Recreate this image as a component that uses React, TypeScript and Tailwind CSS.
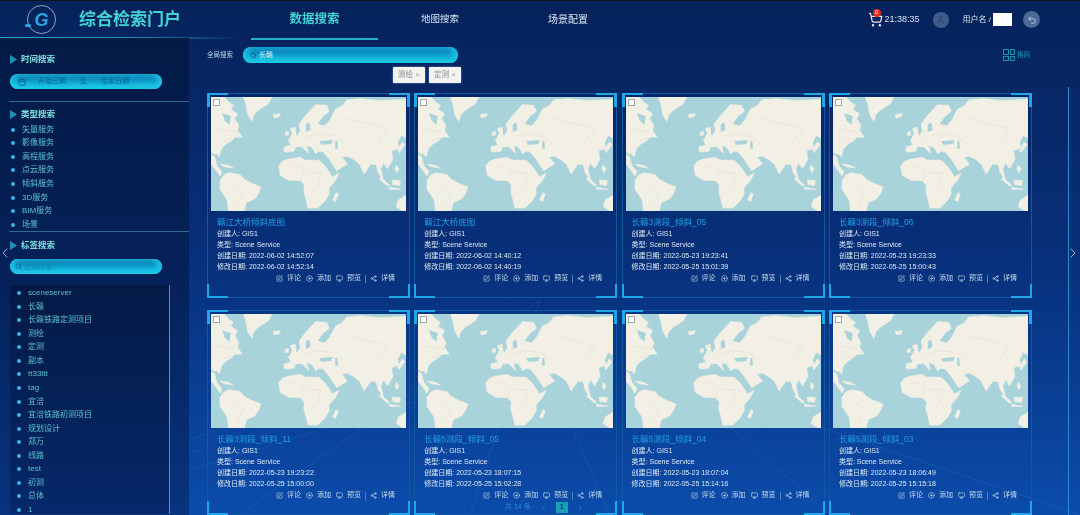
import { Calendar, ChevronLeft, ChevronRight, CirclePlus, Monitor, Search, Share2, ShoppingCart, SquarePen, Undo2, User } from "lucide-react"

const sans = "font-['Liberation_Sans','Noto_Sans_CJK_SC',sans-serif]"

const typeItems = ["矢量服务", "影像服务", "高程服务", "点云服务", "倾斜服务", "3D服务", "BIM服务", "场景"]
const tagItems = ["sceneserver", "长赣", "长赣铁路定测项目", "测绘", "定测", "副本", "tt33ttt", "tag", "宜涪", "宜涪铁路初测项目", "规划设计", "郑万", "线路", "test", "初测", "总体", "1"]

const cards = [
  { title: "赣江大桥倾斜底图", created: "2022-06-02 14:52:07", modified: "2022-06-02 14:52:14" },
  { title: "赣江大桥底图", created: "2022-06-02 14:40:12", modified: "2022-06-02 14:40:19" },
  { title: "长赣3测段_倾斜_05", created: "2022-05-23 19:23:41", modified: "2022-05-25 15:01:39" },
  { title: "长赣3测段_倾斜_06", created: "2022-05-23 19:23:33", modified: "2022-05-25 15:00:43" },
  { title: "长赣3测段_倾斜_11", created: "2022-05-23 19:23:22", modified: "2022-05-25 15:00:00" },
  { title: "长赣5测段_倾斜_05", created: "2022-05-23 18:07:15", modified: "2022-05-25 15:02:28" },
  { title: "长赣5测段_倾斜_04", created: "2022-05-23 18:07:04", modified: "2022-05-25 15:14:16" },
  { title: "长赣5测段_倾斜_03", created: "2022-05-23 18:06:49", modified: "2022-05-25 15:15:18" },
]

function SectionTitle({ label }: { label: string }) {
  return (
    <div className="flex items-center gap-[4px] pl-[10px] h-[14px]">
      <svg width="7" height="9" viewBox="0 0 7 9"><path d="M0 0 L7 4.5 L0 9 Z" fill="#1b93b8" /></svg>
      <span className="text-[8.5px] font-bold text-[#7fe0e0]">{label}</span>
    </div>
  )
}

function Pill({ children, className }: { children: React.ReactNode; className: string }) {
  return (
    <div className={`flex items-center rounded-full bg-gradient-to-b from-[#0a5f9e] via-[#10a0cf] to-[#1fd3ea] shadow-[inset_4px_0_6px_#1cc4e4,inset_-4px_0_6px_#1cc4e4] ${className}`}>
      {children}
    </div>
  )
}

function WorldMap() {
  return (
    <svg viewBox="33 35 582 342" className="w-full h-full block" preserveAspectRatio="none">
      <rect x="33" y="35" width="582" height="342" fill="#a9d3db" />
      <g fill="#f2efe5" stroke="#f2efe5" strokeWidth="2" strokeLinejoin="round">
        {/* north america */}
        <path d="M33 35 L72 35 L85 50 L100 60 L92 72 L112 85 L104 100 L116 120 L112 135 L126 155 L104 156 L96 165 L78 176 L64 190 L58 214 L50 206 L42 206 L33 200 Z" />
        <path d="M33 208 L44 214 L50 240 L66 260 L60 272 L46 252 L33 236 Z" />
        <path d="M60 236 L84 240 L100 248 L72 244 Z" />
        {/* greenland, iceland */}
        <path d="M130 35 L215 35 L204 55 L172 76 L160 90 L155 108 L143 88 L138 60 Z" />
        <path d="M218 88 L240 85 L236 95 L222 97 Z" />
        {/* south america */}
        <path d="M60 285 L72 268 L88 262 L120 268 L132 282 L150 292 L182 305 L176 322 L164 340 L138 352 L132 377 L85 377 L82 345 L60 312 Z" />
        {/* africa */}
        <path d="M235 242 L246 228 L262 222 L300 216 L312 224 L355 225 L372 240 L385 258 L395 275 L415 264 L405 285 L385 308 L386 325 L375 345 L352 368 L322 368 L316 340 L310 320 L312 300 L300 286 L265 285 L240 270 Z" />
        {/* eurasia */}
        <path d="M250 196 L252 184 L272 180 L264 164 L274 155 L292 150 L300 136 L296 116 L314 92 L345 58 L378 60 L386 78 L368 92 L350 116 L372 122 L388 104 L404 72 L424 62 L438 44 L480 40 L540 46 L615 42 L615 158 L600 150 L590 172 L594 188 L572 196 L576 222 L560 250 L548 232 L540 250 L548 286 L532 262 L526 238 L510 236 L490 266 L476 236 L456 220 L438 212 L424 216 L440 236 L408 256 L385 220 L368 200 L354 198 L346 206 L334 186 L318 180 L324 204 L304 184 L286 184 L280 198 L256 200 Z" />
        {/* uk, ireland */}
        <path d="M270 130 L284 126 L288 154 L268 160 L276 144 Z" />
        <path d="M256 140 L264 138 L264 150 L254 150 Z" />
        {/* madagascar */}
        <path d="M406 322 L413 326 L405 348 L396 344 Z" />
        {/* australia */}
        <path d="M615 330 L592 344 L586 364 L606 377 L615 377 Z" />
        {/* indonesia, philippines */}
        <path d="M540 276 L566 300 L560 302 L536 282 Z" />
        <path d="M574 284 L598 286 L596 300 L576 298 Z" />
        <path d="M566 306 L600 312 L566 312 Z" />
        <path d="M586 240 L594 250 L588 262 L582 250 Z" />
        {/* japan */}
        <path d="M604 170 L612 178 L594 202 L590 194 Z" />
      </g>
      <g fill="#a9d3db">
        <path d="M66 84 L92 92 L88 118 L74 106 Z" />
        <path d="M356 168 L396 164 L392 176 L362 178 Z" />
        <path d="M404 166 L410 166 L412 190 L404 190 Z" />
        <path d="M316 118 L326 110 L330 134 L316 140 Z" />
      </g>
      <g stroke="#dcccc6" strokeWidth="0.9" fill="none">
        <path d="M320 262 L360 262 L352 300 L332 322" />
        <path d="M270 240 L310 250 L302 284" />
        <path d="M440 100 L560 130 L522 186" />
        <path d="M300 160 L350 145 L400 150 L440 180" />
        <path d="M100 300 L130 320 L110 360" />
        <path d="M44 130 L110 140 M60 170 L96 160" />
      </g>
    </svg>
  )
}

function Corners() {
  const c = "absolute bg-[#1ea8ea]"
  return (
    <>
      <span className={`${c} -left-px -top-px w-[21px] h-[2px]`} />
      <span className={`${c} -left-px -top-px w-[3px] h-[14px]`} />
      <span className={`${c} -right-px -top-px w-[21px] h-[2px]`} />
      <span className={`${c} -right-px -top-px w-[3px] h-[14px]`} />
      <span className={`${c} -left-px -bottom-px w-[21px] h-[2px]`} />
      <span className={`${c} -left-px -bottom-px w-[2px] h-[14px]`} />
      <span className={`${c} -right-px -bottom-px w-[21px] h-[2px]`} />
      <span className={`${c} -right-px -bottom-px w-[2px] h-[14px]`} />
    </>
  )
}

function Card({ title, created, modified }: { title: string; created: string; modified: string }) {
  return (
    <div className="relative h-[205px] border border-[#10589f] px-[3px] pt-[3px]">
      <Corners />
      <div className="relative h-[114px]">
        <WorldMap />
        <span className="absolute left-[2px] top-[2px] w-[7px] h-[7px] bg-white border border-[#9aa]" />
      </div>
      <div className="pl-[6px] pt-[6px] text-[7px] text-[#dbe8f2]">
        <div className="text-[8.5px] leading-[11px] text-[#1e9fe6]">{title}</div>
        <div className="leading-[11.1px]">创建人: GIS1</div>
        <div className="leading-[11.1px]">类型: Scene Service</div>
        <div className="leading-[11.1px]">创建日期: {created}</div>
        <div className="leading-[11.1px]">修改日期: {modified}</div>
      </div>
      <div className="flex items-center justify-end gap-[4px] pr-[11px] pt-[1px] text-[7px] text-[#c8dcec]">
        <SquarePen size={7} />
        <span>评论</span>
        <CirclePlus size={7} className="ml-[1px]" />
        <span>添加</span>
        <Monitor size={7} className="ml-[1px]" />
        <span>预览</span>
        <span className="w-px h-[8px] bg-[#4d7fb0]" />
        <Share2 size={7} />
        <span>详情</span>
      </div>
    </div>
  )
}

function TagChip({ label }: { label: string }) {
  return (
    <div className="flex items-center justify-between w-[32px] h-[16px] px-[5px] bg-[#f3f4f2] text-[7.5px] text-[#8a8a8a] rounded-[1px] shadow-[0_0_2px_#7fa6d8]">
      <span>{label}</span>
      <span className="text-[8px] text-[#a5a5a5]">×</span>
    </div>
  )
}

export default function App() {
  return (
    <div className={`${sans} relative w-[1080px] h-[515px] overflow-hidden bg-gradient-to-b from-[#06225a] via-[#07307a] to-[#0b4cab] blur-[0.5px]`}>
      {/* perspective lines */}
      <svg className="absolute inset-0 w-full h-full pointer-events-none" viewBox="0 0 1080 515">
        <g stroke="#3f86d8" strokeWidth="0.7" opacity="0.3">
          <path d="M540 300 L240 515" />
          <path d="M540 300 L470 515" />
          <path d="M560 400 L610 515" />
          <path d="M700 400 L830 515" />
          <path d="M189 470 L420 400" />
          <path d="M189 440 L300 400" />
          <path d="M800 420 L1080 515" />
          <path d="M0 510 L200 450" />
        </g>
      </svg>

      <header className="relative flex items-center h-[38px] border-t border-[#10141f]">
        <div className="flex items-center w-[251px] h-full pl-[27px]">
          <div className="relative flex items-center justify-center w-[29px] h-[29px] rounded-full border border-[#8ea8c4]">
            <span className="text-[18px] font-bold italic text-[#2aa8e8] leading-none">G</span>
            <span className="absolute left-[-3px] bottom-[6px] w-[6px] h-[3px] rounded-full bg-[#2aa8e8]" />
          </div>
          <span className="ml-[23px] text-[17px] font-bold text-[#42d3d6]">综合检索门户</span>
        </div>
        <nav className="flex items-center h-full">
          <div className="flex items-center justify-center w-[127px] h-full text-[12.5px] font-bold text-[#42d3d6]">数据搜索</div>
          <div className="ml-[43px] text-[9.5px] text-[#d5e4f0]">地图搜索</div>
          <div className="ml-[89px] text-[10px] text-[#d5e4f0]">场景配置</div>
        </nav>
        <div className="ml-auto flex items-center pr-[40px] text-[#d5e4f0]">
          <div className="relative">
            <ShoppingCart size={15} className="text-[#f0e6e6]" />
            <span className="absolute -top-[3px] left-[5px] flex items-center justify-center w-[8px] h-[8px] rounded-full bg-[#e0301e] text-[5px] text-white">0</span>
          </div>
          <span className="ml-[2px] text-[9px]">21:38:35</span>
          <div className="ml-[13px] flex items-center justify-center w-[16px] h-[16px] rounded-full bg-[#3f5c8c]">
            <User size={9} className="text-[#1f3b70]" />
          </div>
          <span className="ml-[14px] text-[8px]">用户名 /</span>
          <span className="ml-[2px] w-[19px] h-[13px] bg-white" />
          <div className="ml-[11px] flex items-center justify-center w-[17px] h-[17px] rounded-full bg-[#4a6a9a]">
            <Undo2 size={10} className="text-[#c8d4e4]" />
          </div>
        </div>
        <span className="absolute left-[251px] -bottom-[2px] w-[127px] h-[2px] bg-[#23b4cc]" />
        <span className="absolute left-0 -bottom-[1px] w-[240px] h-[2px] bg-gradient-to-r from-[#23b4dc] via-[#1a94c4] to-transparent" />
      </header>

      <div className="relative flex h-[477px]">
        <aside className="w-[189px] h-full shrink-0 bg-gradient-to-b from-[#031a45] via-[#05215a] to-[#08337e]">
          <div className="pt-[14px]">
            <SectionTitle label="时间搜索" />
          </div>
          <Pill className="mt-[8px] ml-[10px] w-[152px] h-[15px] pl-[8px] text-[7px] text-[#0a6a90]">
            <Calendar size={8} className="text-[#0d5578]" />
            <span className="ml-[12px]">开始日期</span>
            <span className="ml-[14px]">至</span>
            <span className="ml-[14px]">结束日期</span>
          </Pill>
          <div className="mt-[12px] ml-[9px] h-px bg-[#2a6a90]" />
          <div className="pt-[5px]">
            <SectionTitle label="类型搜索" />
          </div>
          <ul className="mt-[2px]">
            {typeItems.map((t) => (
              <li key={t} className="flex items-center h-[13.55px] pl-[11px] text-[8px] text-[#5cc0cc]">
                <span className="w-[4px] h-[4px] rounded-full bg-[#3db4e4]" />
                <span className="ml-[7px]">{t}</span>
              </li>
            ))}
          </ul>
          <div className="ml-[9px] h-px bg-[#2a6a90]" />
          <div className="pt-[6px]">
            <SectionTitle label="标签搜索" />
          </div>
          <Pill className="mt-[7px] ml-[10px] w-[152px] h-[15px] pl-[5px] text-[7px] text-[#0f86a8]">
            <Search size={7} className="text-[#0d5578]" />
            <span className="ml-[2px]">过滤标签</span>
          </Pill>
          <ul className="mt-[11px] ml-[10px] w-[160px] h-[229px] overflow-hidden pt-px border-r border-[#4d9ab8] bg-gradient-to-b from-[#031a45] to-[#06286a]">
            {tagItems.map((t) => (
              <li key={t} className="flex items-center h-[13.55px] pl-[7px] text-[8px] text-[#5cc0cc]">
                <span className="w-[4px] h-[4px] rounded-full bg-[#3db4e4]" />
                <span className="ml-[7px]">{t}</span>
              </li>
            ))}
          </ul>
        </aside>

        <main className="relative flex-1 min-w-0 pl-[18px]">
          <div className="flex items-center h-[25px] pt-[9px]">
            <span className="w-[36px] text-[6.5px] text-[#b8dcea]">全局搜索</span>
            <Pill className="w-[215px] h-[16px] pl-[7px] text-[7px] text-[#e4f4fa]">
              <Search size={7} className="text-[#0d4f80]" />
              <span className="ml-[2px]">长赣</span>
            </Pill>
            <div className="ml-auto mr-[50px] flex items-center gap-[2px] text-[6.5px] text-[#1b93b0]">
              <div className="grid grid-cols-2 gap-[1px]">
                <span className="w-[5.5px] h-[5.5px] border border-[#1b8fae]" />
                <span className="w-[5.5px] h-[5.5px] border border-[#1b8fae]" />
                <span className="w-[5.5px] h-[5.5px] border border-[#1b8fae]" />
                <span className="w-[5.5px] h-[5.5px] border border-[#1b8fae]" />
              </div>
              <span>格网</span>
            </div>
          </div>
          <div className="flex gap-[4px] pl-[186px] pt-[4px] h-[30px]">
            <TagChip label="测绘" />
            <TagChip label="定测" />
          </div>
          <div className="grid grid-cols-[repeat(4,203px)] gap-x-[4.3px] gap-y-[12px]">
            {cards.map((c) => (
              <Card key={c.title} {...c} />
            ))}
          </div>
          {/* rail on the right */}
          <span className="absolute left-[879px] top-[49px] bottom-0 w-px bg-[#2b8ad0]" />
          {/* pagination sits over the second row */}
          <div className="absolute left-[316px] bottom-[2px] flex items-center gap-[8px] text-[7px] text-[#2a8ac8]">
            <span>共 14 条</span>
            <ChevronLeft size={9} />
            <span className="flex items-center justify-center w-[12px] h-[11px] bg-[#1a9fb8] text-[#0a3a7a] font-bold">1</span>
            <ChevronRight size={9} />
          </div>
        </main>

        <ChevronLeft size={16} strokeWidth={1.2} className="absolute left-[-3px] top-[207px] text-[#c8d8e8]" />
        <ChevronRight size={16} strokeWidth={1.2} className="absolute right-[-1px] top-[207px] text-[#c8d8e8]" />
      </div>
    </div>
  )
}
